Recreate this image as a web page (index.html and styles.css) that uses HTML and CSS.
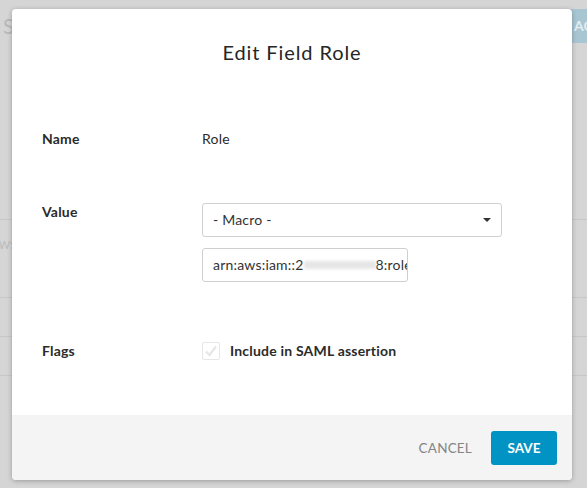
FILE: index.html
```html
<!DOCTYPE html>
<html lang="en">
<head>
<meta charset="utf-8">
<title>Edit Field Role</title>
<link rel="stylesheet" href="styles.css">
</head>
<body>
<div class="bg-page">
  <div class="bg-head">
    <div class="bg-title">Single Sign-On</div>
    <div class="bg-btn">ACTIONS</div>
  </div>
  <div class="bg-table">
    <div class="bg-row bg-row-tall"><span class="bg-cell">aws</span></div>
    <div class="bg-row"></div>
    <div class="bg-row"></div>
  </div>
</div>

<div class="modal">
  <div class="modal-body">
    <h1 class="modal-title">Edit Field Role</h1>
    <div class="form-row row-name">
      <div class="label">Name</div>
      <div class="value">Role</div>
    </div>
    <div class="form-row row-value">
      <div class="label">Value</div>
      <div class="value">
        <div class="select">
          <span>- Macro -</span>
          <span class="caret"></span>
        </div>
        <div class="input"><span>arn:aws:iam::2</span><span class="redact" aria-hidden="true"></span><span>8:role/okta</span></div>
      </div>
    </div>
    <div class="form-row row-flags">
      <div class="label">Flags</div>
      <div class="value check-wrap">
        <span class="checkbox">
          <svg width="14" height="14" viewBox="0 0 14 14"><path d="M2 7.5 L5.5 11 L12 2.5" fill="none" stroke="#e6e6e6" stroke-width="2.2"/></svg>
        </span>
        <span class="check-label">Include in SAML assertion</span>
      </div>
    </div>
  </div>
  <div class="modal-foot">
    <span class="btn-cancel">CANCEL</span>
    <span class="btn-save">SAVE</span>
  </div>
</div>
</body>
</html>
```

FILE: styles.css
```css
html, body {
  margin: 0;
  padding: 0;
}
body {
  width: 587px;
  height: 488px;
  overflow: hidden;
  background: #d5d5d5;
  font-family: "Lato", "Liberation Sans", sans-serif;
  position: relative;
}
.bg-page {
  width: 700px;
}
.bg-head {
  display: grid;
  grid-template-columns: 560px auto;
  align-items: start;
  padding-top: 9px;
  height: 34px;
}
.bg-title {
  padding-left: 3px;
  font-size: 21px;
  line-height: 34px;
  color: #b8b8b8;
  white-space: nowrap;
  overflow: hidden;
}
.bg-btn {
  height: 34px;
  line-height: 34px;
  padding: 0 14px;
  background: #a8c6d2;
  color: #e4edf1;
  font-weight: bold;
  font-size: 14px;
  width: 100px;
}
.bg-table {
  margin-top: 176px;
  border-top: 1px solid #c7c7c7;
}
.bg-row {
  height: 38px;
  border-bottom: 1px solid #c7c7c7;
}
.bg-row-tall {
  height: 77px;
}
.bg-cell {
  display: block;
  padding-top: 14px;
  margin-left: -9px;
  font-size: 15px;
  color: #bdbdbd;
}

.modal {
  position: absolute;
  left: 12px;
  top: 9px;
  width: 560px;
  height: 471px;
  background: #fff;
  border-radius: 4px;
  box-shadow: 0 1px 5px rgba(0,0,0,0.28);
  display: flex;
  flex-direction: column;
  overflow: hidden;
  color: #2b2b2b;
}
.modal-body {
  flex: 1;
  padding: 0 30px;
}
.modal-title {
  margin: 0;
  padding-top: 31px;
  font-size: 20px;
  font-weight: normal;
  letter-spacing: 0.9px;
  line-height: 24px;
  text-align: center;
  color: #262626;
}
.form-row {
  display: grid;
  grid-template-columns: 160px 1fr;
  align-items: start;
}
.row-name { margin-top: 66px; }
.row-value { margin-top: 55px; }
.row-flags { margin-top: 60px; }
.label {
  font-weight: bold;
  font-size: 14px;
  letter-spacing: 0.2px;
  line-height: 18px;
}
.value {
  font-size: 14px;
  letter-spacing: 0.2px;
  line-height: 18px;
}
.select {
  width: 300px;
  height: 34px;
  box-sizing: border-box;
  border: 1px solid #cfcfcf;
  border-radius: 3px;
  display: flex;
  align-items: center;
  justify-content: space-between;
  padding: 0 10px;
  color: #333;
}
.caret {
  width: 0;
  height: 0;
  border-left: 4px solid transparent;
  border-right: 4px solid transparent;
  border-top: 4px solid #333;
}
.input {
  margin-top: 11px;
  width: 206px;
  height: 34px;
  box-sizing: border-box;
  border: 1px solid #cfcfcf;
  border-radius: 3px;
  padding: 0 10px;
  display: flex;
  align-items: center;
  white-space: nowrap;
  overflow: hidden;
  color: #333;
}
.redact {
  display: inline-block;
  width: 72px;
  flex: none;
  background: #e6e6e6;
  filter: blur(1.5px);
  height: 8px;
}
.check-wrap {
  display: flex;
  align-items: center;
  gap: 10px;
}
.checkbox {
  width: 18px;
  height: 18px;
  box-sizing: border-box;
  border: 1px solid #e6e6e6;
  border-radius: 2px;
  display: flex;
  align-items: center;
  justify-content: center;
}
.check-label {
  font-weight: bold;
}
.modal-foot {
  height: 65px;
  background: #f4f4f4;
  display: flex;
  justify-content: flex-end;
  align-items: center;
  padding-right: 15px;
  gap: 19px;
}
.btn-cancel {
  font-size: 13.5px;
  color: #858585;
  letter-spacing: 0.2px;
}
.btn-save {
  width: 66px;
  height: 34px;
  line-height: 34px;
  text-align: center;
  background: #0093c3;
  color: #fff;
  font-weight: bold;
  font-size: 13.5px;
  border-radius: 3px;
}
```
